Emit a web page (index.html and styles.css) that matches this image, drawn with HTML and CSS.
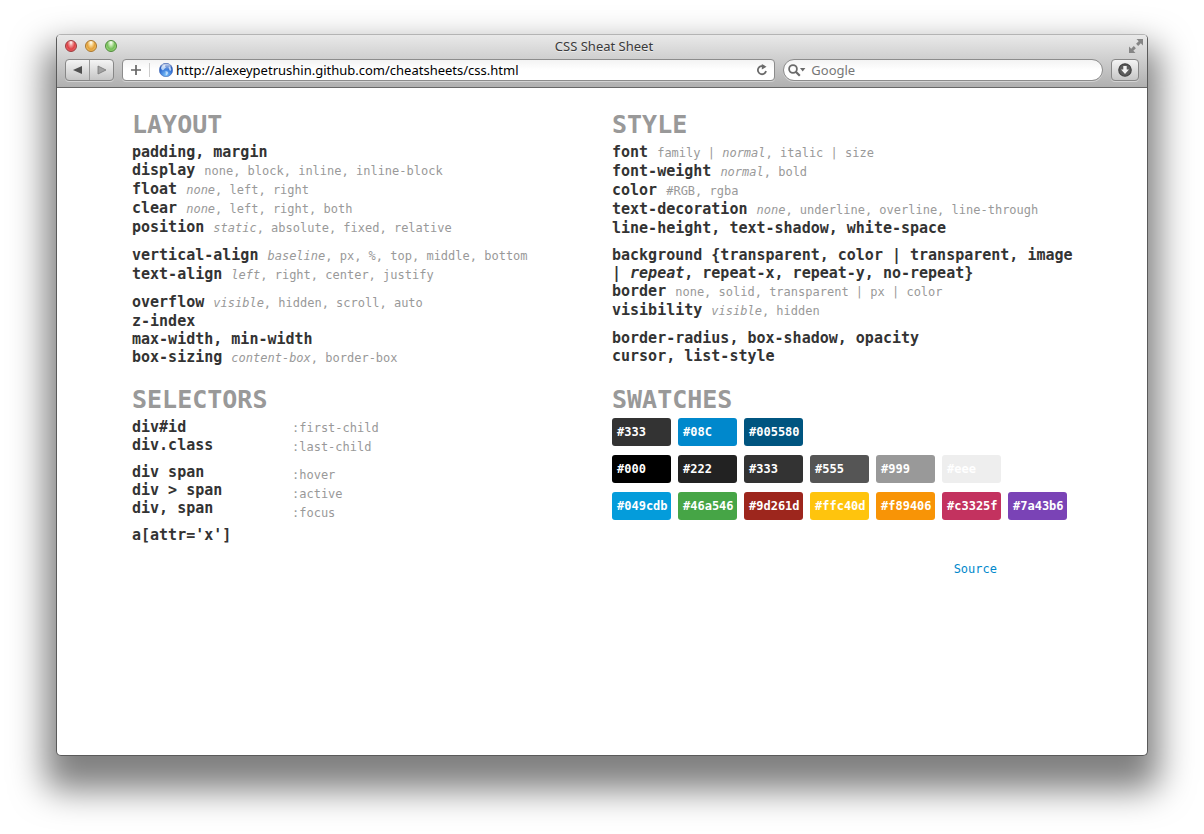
FILE: index.html
```html
<!DOCTYPE html>
<html lang="en">
<head>
<meta charset="utf-8">
<title>CSS Sheat Sheet</title>
<link rel="stylesheet" href="styles.css">
</head>
<body>
<div class="window">
  <header class="chrome">
    <div class="titlebar">
      <div class="lights">
        <button class="light light-close" aria-label="Close"></button>
        <button class="light light-minimize" aria-label="Minimize"></button>
        <button class="light light-zoom" aria-label="Zoom"></button>
      </div>
      <div class="window-title">CSS Sheat Sheet</div>
      <button class="fullscreen" aria-label="Full screen">
        <svg width="14" height="14" viewBox="0 0 14 14"><g fill="#858585"><path d="M7.500 0H14v6.500l-2.200-2.200-2.600 2.600-2.100-2.100 2.600-2.600z"/><path d="M0 7.500V14h6.500l-2.200-2.200 2.600-2.600-2.100-2.100-2.600 2.600z"/></g></svg>
      </button>
    </div>
    <div class="toolbar">
      <div class="history">
        <button aria-label="Back"><svg width="10" height="10" viewBox="0 0 10 10"><path d="M9 1v8L0 5z" fill="#505050"/></svg></button>
        <button aria-label="Forward"><svg width="10" height="10" viewBox="0 0 10 10"><path d="M1 1v8l8-4z" fill="#a2a2a2" stroke="#777" stroke-width=".8"/></svg></button>
      </div>
      <div class="field address">
        <button class="add" aria-label="Add bookmark"><svg width="10" height="10" viewBox="0 0 10 10"><path d="M5 0v10M0 5h10" stroke="#666" stroke-width="1.700"/></svg></button>
        <svg class="globe" width="14" height="14" viewBox="0 0 14 14">
          <defs>
            <radialGradient id="sea" cx=".5" cy=".85" r=".85"><stop offset="0" stop-color="#7cc4fb"/><stop offset=".55" stop-color="#3573d6"/><stop offset="1" stop-color="#2349a4"/></radialGradient>
            <linearGradient id="shine" x2="0" y2="1"><stop offset="0" stop-color="#fff" stop-opacity=".75"/><stop offset="1" stop-color="#fff" stop-opacity="0"/></linearGradient>
          </defs>
          <circle cx="7" cy="7" r="6.700" fill="url(#sea)" stroke="#4468b4" stroke-width=".6"/>
          <path d="M1.800 5L4 2.200l2.500-.4-.5 1.600 1 .9L5.500 5.800 4.600 7l-1.500.3zM9.500 4l1.600-.4 1.200 2.600-.6 1.800-1.300-.8zM6.500 8l2.200.8.5 1.200-1.400 2.200-1-.4z" fill="#cfe6fc" opacity=".8"/>
          <ellipse cx="7" cy="3.800" rx="4.800" ry="3" fill="url(#shine)"/>
        </svg>
        <input class="url" type="text" aria-label="Address" value="http://alexeypetrushin.github.com/cheatsheets/css.html">
        <button class="reload" aria-label="Reload"><svg width="12" height="12" viewBox="0 0 12 12"><path d="M8.500 2.900A4.100 4.100 0 1 0 10 7" fill="none" stroke="#6a6a6a" stroke-width="1.800"/><path d="M5.800 0l4.700 2.800-4.700 2.800z" fill="#6a6a6a"/></svg></button>
      </div>
      <div class="field search">
        <svg width="18" height="13" viewBox="0 0 18 13"><circle cx="5" cy="5" r="3.900" fill="none" stroke="#6a6a6a" stroke-width="1.800"/><path d="M7.800 7.800l4 4" stroke="#6a6a6a" stroke-width="2.200"/><path d="M12 4h5.400l-2.700 3.400z" fill="#6a6a6a"/></svg>
        <input type="text" aria-label="Search" placeholder="Google">
      </div>
      <button class="downloads" aria-label="Downloads"><svg width="14" height="14" viewBox="0 0 14 14"><circle cx="7" cy="7" r="6.200" fill="#5c5c5c" stroke="#444" stroke-width="1.200"/><path d="M5.300 3h3.400v3.600H11L7 11 3 6.600h2.300z" fill="#f2f2f2"/></svg></button>
    </div>
  </header>

  <main class="page">
    <div class="sheet">
      <section>
        <h1>LAYOUT</h1>
        <ul>
          <li>padding, margin</li>
          <li>display <small>none, block, inline, inline-block</small></li>
          <li>float <small><em>none</em>, left, right</small></li>
          <li>clear <small><em>none</em>, left, right, both</small></li>
          <li>position <small><em>static</em>, absolute, fixed, relative</small></li>
        </ul>
        <ul>
          <li>vertical-align <small><em>baseline</em>, px, %, top, middle, bottom</small></li>
          <li>text-align <small><em>left</em>, right, center, justify</small></li>
        </ul>
        <ul>
          <li>overflow <small><em>visible</em>, hidden, scroll, auto</small></li>
          <li>z-index</li>
          <li>max-width, min-width</li>
          <li>box-sizing <small><em>content-box</em>, border-box</small></li>
        </ul>
      </section>
      <section>
        <h1>STYLE</h1>
        <ul>
          <li>font <small>family | <em>normal</em>, italic | size</small></li>
          <li>font-weight <small><em>normal</em>, bold</small></li>
          <li>color <small>#RGB, rgba</small></li>
          <li>text-decoration <small><em>none</em>, underline, overline, line-through</small></li>
          <li>line-height, text-shadow, white-space</li>
        </ul>
        <ul>
          <li>background {transparent, color | transparent, image | <em>repeat</em>, repeat-x, repeat-y, no-repeat}</li>
          <li>border <small>none, solid, transparent | px | color</small></li>
          <li>visibility <small><em>visible</em>, hidden</small></li>
        </ul>
        <ul>
          <li>border-radius, box-shadow, opacity</li>
          <li>cursor, list-style</li>
        </ul>
      </section>
      <section>
        <h1>SELECTORS</h1>
        <div class="selectors">
          <div>
            <ul><li>div#id</li><li>div.class</li></ul>
            <ul><li>div span</li><li>div &gt; span</li><li>div, span</li></ul>
            <ul><li>a[attr='x']</li></ul>
          </div>
          <div>
            <ul><li><small>:first-child</small></li><li><small>:last-child</small></li></ul>
            <ul><li><small>:hover</small></li><li><small>:active</small></li><li><small>:focus</small></li></ul>
          </div>
        </div>
      </section>
      <section>
        <h1>SWATCHES</h1>
        <div class="swatches">
          <div class="swatch-row"><span class="swatch c-333">#333</span><span class="swatch c-08c">#08C</span><span class="swatch c-005580">#005580</span></div>
          <div class="swatch-row"><span class="swatch c-000">#000</span><span class="swatch c-222">#222</span><span class="swatch c-333">#333</span><span class="swatch c-555">#555</span><span class="swatch c-999">#999</span><span class="swatch c-eee">#eee</span></div>
          <div class="swatch-row"><span class="swatch c-blue">#049cdb</span><span class="swatch c-green">#46a546</span><span class="swatch c-red">#9d261d</span><span class="swatch c-yellow">#ffc40d</span><span class="swatch c-orange">#f89406</span><span class="swatch c-pink">#c3325f</span><span class="swatch c-purple">#7a43b6</span></div>
        </div>
        <footer><a href="#source">Source</a></footer>
      </section>
    </div>
  </main>
</div>
</body>
</html>
```

FILE: styles.css
```css
* { box-sizing: border-box; }

body {
  display: flex;
  min-height: 100vh;
  margin: 0;
  padding: 34px 56px 78px;
  background: #fff;
  color: #333;
}

button {
  display: flex;
  align-items: center;
  justify-content: center;
  margin: 0;
  padding: 0;
  border: 0;
  background: none;
}

input {
  flex: 1;
  min-width: 0;
  padding: 0;
  border: 0;
  outline: 0;
  background: none;
  color: #000;
  font: 13px/20px "Noto Sans", "Open Sans", sans-serif;
}

input::placeholder { color: #777; opacity: 1; }

.window {
  display: flex;
  flex: 1;
  flex-direction: column;
  min-width: 0;
  border: 1px solid #5a5a5a;
  border-top-color: #b4b4b4;
  border-radius: 5px;
  background: #fff;
  box-shadow: 0 23px 34px 11px rgba(0, 0, 0, .5);
}

/* Browser chrome */
.chrome {
  border-bottom: 1px solid #686868;
  border-radius: 4px 4px 0 0;
  background: linear-gradient(#e9e9e9, #b0b0b0);
}

.titlebar {
  display: grid;
  grid-template-columns: 1fr auto 1fr;
  align-items: center;
  height: 21px;
  padding: 0 4px 0 8px;
}

.lights { display: flex; gap: 8px; }

.light {
  width: 12px;
  height: 12px;
  border: 1px solid;
  border-radius: 50%;
}

.light-close {
  border-color: #9b3a3c;
  background: radial-gradient(ellipse at 50% 15%, #fff 0, #f29a9a 25%, #df4247 55%, #f28184 100%);
}

.light-minimize {
  border-color: #a9752c;
  background: radial-gradient(ellipse at 50% 15%, #fff 0, #f9d995 25%, #e4a03b 55%, #fbdc82 100%);
}

.light-zoom {
  border-color: #4e8a3a;
  background: radial-gradient(ellipse at 50% 15%, #fff 0, #c3e8ae 25%, #75bf59 55%, #bdef98 100%);
}

.window-title {
  color: #3a3a3a;
  font: 13px/20px "Noto Sans", "Open Sans", sans-serif;
  text-shadow: 0 1px 0 rgba(255, 255, 255, .5);
}

.fullscreen { justify-self: end; }

.toolbar {
  display: flex;
  gap: 8px;
  padding: 3px 8px 6px;
}

.history,
.downloads {
  height: 22px;
  border: 1px solid #878787;
  border-radius: 4px;
  background: linear-gradient(#f4f4f4, #c6c6c6);
  box-shadow: 0 1px 0 rgba(255, 255, 255, .4);
}

.history { display: flex; width: 49px; }
.history button { flex: 1; }
.history button + button { border-left: 1px solid #999; }
.downloads { width: 28px; }

.field {
  display: flex;
  align-items: center;
  min-width: 0;
  height: 22px;
  border: 1px solid #8c8c8c;
  border-radius: 4px;
  background: linear-gradient(#f3f3f3, #fff 50%);
  box-shadow: 0 1px 0 rgba(255, 255, 255, .4);
}

.address { flex: 68; padding-right: 6px; }
.add { width: 27px; height: 14px; border-right: 1px solid #ccc; }
.globe { margin: 0 3px 0 9px; }
.search { flex: 32; gap: 5px; padding: 0 10px 0 4px; border-radius: 11px; }

/* Cheat sheet */
.page {
  flex: 1;
  padding: 19px 20px 40px;
  font: bold 15px/18px "DejaVu Sans Mono", monospace;
}

.sheet {
  display: grid;
  grid-template-columns: 1fr 1fr;
  gap: 15px 20px;
  max-width: 940px;
  margin: 0 auto;
}

h1 {
  margin: 0;
  color: #999;
  font-size: 25px;
  line-height: 36px;
}

/* Lines may run slightly into the gutter */
ul { margin: 0 -4px 0 0; padding: 0; list-style: none; }
ul + ul { margin-top: 9px; }

small {
  color: #999;
  font-size: 12px;
  font-weight: normal;
}

.selectors {
  display: grid;
  grid-template-columns: 140px 1fr;
  gap: 20px;
}

.swatches { display: grid; gap: 9px; }
.swatch-row { display: flex; flex-wrap: wrap; gap: 7px; }

.swatch {
  width: 59px;
  padding: 5px;
  border-radius: 3px;
  color: #fff;
  font-size: 12px;
}

.c-333 { background: #333; }
.c-08c { background: #08c; }
.c-005580 { background: #005580; }
.c-000 { background: #000; }
.c-222 { background: #222; }
.c-555 { background: #555; }
.c-999 { background: #999; }
.c-eee { background: #eee; }
.c-blue { background: #049cdb; }
.c-green { background: #46a546; }
.c-red { background: #9d261d; }
.c-yellow { background: #ffc40d; }
.c-orange { background: #f89406; }
.c-pink { background: #c3325f; }
.c-purple { background: #7a43b6; }

footer {
  padding: 40px 75px 0 0;
  font-size: 12px;
  font-weight: normal;
  text-align: right;
}

a { color: #08c; text-decoration: none; }
```
